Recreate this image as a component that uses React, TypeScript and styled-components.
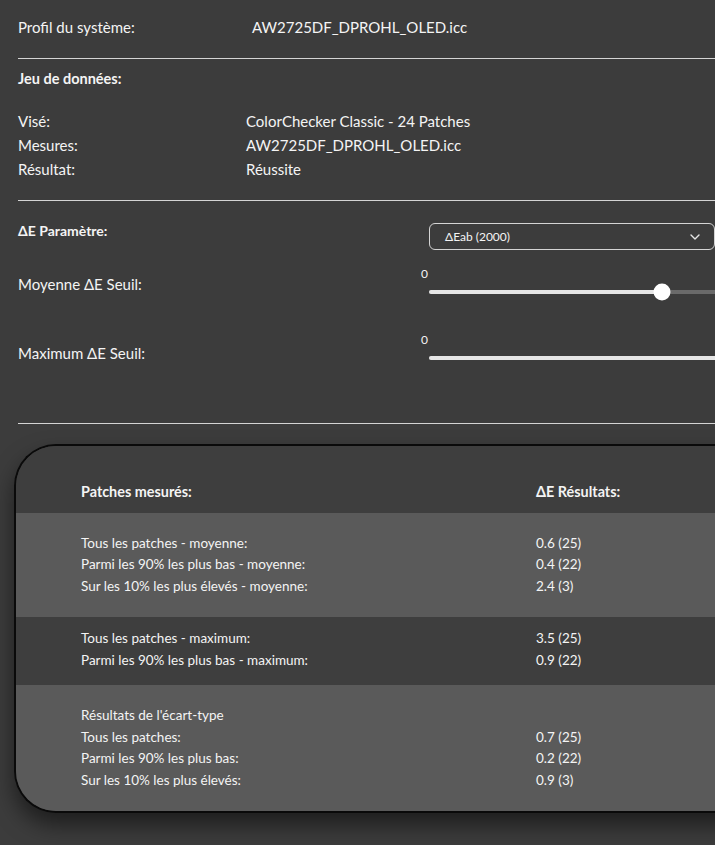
import { Fragment } from "react";
import styled, { createGlobalStyle } from "styled-components";

const GlobalStyle = createGlobalStyle`
  html, body {
    margin: 0;
    padding: 0;
    background: #3c3c3c;
    overflow: hidden;
  }
  body {
    font-family: Lato, "Liberation Sans", sans-serif;
    color: #f4f4f4;
  }
`;

const StyledPage = styled.div`
  width: 780px;
  padding: 15px 0 40px 18px;
  display: flex;
  flex-direction: column;
`;

const StyledInfoRow = styled.div<{ $col: number }>`
  display: grid;
  grid-template-columns: ${(p) => p.$col}px 1fr;
  font-size: 15px;
  line-height: 24px;
`;

const StyledDivider = styled.hr<{ $top: number; $bottom: number }>`
  border: none;
  border-top: 1px solid #d4d4d4;
  margin: ${(p) => p.$top}px 0 ${(p) => p.$bottom}px;
`;

const StyledHeading = styled.div`
  font-size: 14.5px;
  font-weight: 700;
  line-height: 24px;
`;

const StyledDataList = styled.div`
  margin-top: 18px;
  display: flex;
  flex-direction: column;
`;

const StyledParamRow = styled.div`
  display: grid;
  grid-template-columns: 411px 286px;
  align-items: start;
`;

const StyledParamLabel = styled.div`
  font-size: 14px;
  font-weight: 700;
  line-height: 16px;
`;

const StyledSelect = styled.div`
  height: 27px;
  box-sizing: border-box;
  border: 1px solid #d4d4d4;
  border-radius: 6px;
  padding: 0 14px 0 15px;
  display: flex;
  align-items: center;
  justify-content: space-between;
  font-size: 12px;
`;

const StyledSliderRow = styled.div<{ $top: number; $labelTop: number }>`
  display: grid;
  grid-template-columns: 403px 1fr;
  align-items: start;
  margin-top: ${(p) => p.$top}px;

  & > :first-child {
    margin-top: ${(p) => p.$labelTop}px;
  }
`;

const StyledSliderLabel = styled.div`
  font-size: 15px;
  line-height: 24px;
`;

const StyledSlider = styled.div<{ $gap: number }>`
  display: flex;
  flex-direction: column;
  gap: ${(p) => p.$gap}px;
`;

const StyledSliderValue = styled.div`
  font-size: 12px;
  line-height: 16px;
`;

const StyledTrack = styled.div`
  position: relative;
  margin-left: 8px;
  height: 4px;
  width: 320px;
  border-radius: 2px;
  background: #6a6a6a;
`;

const StyledFill = styled.div`
  height: 100%;
  border-radius: 2px;
  background: #e6e6e6;
`;

const StyledThumb = styled.div`
  position: absolute;
  top: 50%;
  width: 17px;
  height: 17px;
  border-radius: 50%;
  background: #fff;
  transform: translate(-50%, -50%);
`;

const StyledCard = styled.div`
  margin: 0 0 0 -4px;
  border: 2px solid #0a0a0a;
  border-right: none;
  border-radius: 42px 0 0 42px;
  overflow: hidden;
  background: #3e3e3e;
  box-shadow: 0 12px 22px rgba(0, 0, 0, 0.5);
`;

const StyledGroup = styled.div<{ $light?: boolean; $pt: number; $pb: number }>`
  background: ${(p) => (p.$light ? "#5a5a5a" : "#3e3e3e")};
  padding: ${(p) => p.$pt}px 0 ${(p) => p.$pb}px 65px;
  display: grid;
  grid-template-columns: 455px 1fr;
  font-size: 13.5px;
  line-height: 21.5px;
`;

const StyledCell = styled.div<{ $bold?: boolean }>`
  font-weight: ${(p) => (p.$bold ? 700 : 400)};
  font-size: ${(p) => (p.$bold ? "14.4px" : "inherit")};
`;

function Chevron() {
  return (
    <svg width="10" height="6" viewBox="0 0 10 6" fill="none">
      <path d="M1 1l4 4 4-4" stroke="#e6e6e6" strokeWidth="1.4" strokeLinecap="round" strokeLinejoin="round" />
    </svg>
  );
}

function Slider({ value, fill, gap }: { value: string; fill: number; gap: number }) {
  return (
    <StyledSlider $gap={gap}>
      <StyledSliderValue>{value}</StyledSliderValue>
      <StyledTrack>
        <StyledFill style={{ width: `${fill}px` }} />
        {fill < 320 && <StyledThumb style={{ left: `${fill}px` }} />}
      </StyledTrack>
    </StyledSlider>
  );
}

const groups: { light: boolean; pt: number; pb: number; rows: [string, string][] }[] = [
  {
    light: true,
    pt: 20,
    pb: 20,
    rows: [
      ["Tous les patches - moyenne:", "0.6 (25)"],
      ["Parmi les 90% les plus bas - moyenne:", "0.4 (22)"],
      ["Sur les 10% les plus élevés - moyenne:", "2.4 (3)"],
    ],
  },
  {
    light: false,
    pt: 11,
    pb: 14,
    rows: [
      ["Tous les patches - maximum:", "3.5 (25)"],
      ["Parmi les 90% les plus bas - maximum:", "0.9 (22)"],
    ],
  },
  {
    light: true,
    pt: 20,
    pb: 20,
    rows: [
      ["Résultats de l'écart-type", ""],
      ["Tous les patches:", "0.7 (25)"],
      ["Parmi les 90% les plus bas:", "0.2 (22)"],
      ["Sur les 10% les plus élevés:", "0.9 (3)"],
    ],
  },
];

export default function App() {
  return (
    <>
      <GlobalStyle />
      <StyledPage>
        <StyledInfoRow $col={234}>
          <div>Profil du système:</div>
          <div>AW2725DF_DPROHL_OLED.icc</div>
        </StyledInfoRow>
        <StyledDivider $top={19} $bottom={8} />
        <StyledHeading>Jeu de données:</StyledHeading>
        <StyledDataList>
          <StyledInfoRow $col={228}>
            <div>Visé:</div>
            <div>ColorChecker Classic - 24 Patches</div>
          </StyledInfoRow>
          <StyledInfoRow $col={228}>
            <div>Mesures:</div>
            <div>AW2725DF_DPROHL_OLED.icc</div>
          </StyledInfoRow>
          <StyledInfoRow $col={228}>
            <div>Résultat:</div>
            <div>Réussite</div>
          </StyledInfoRow>
        </StyledDataList>
        <StyledDivider $top={19} $bottom={22} />
        <StyledParamRow>
          <StyledParamLabel>ΔE Paramètre:</StyledParamLabel>
          <StyledSelect>
            <span>ΔEab (2000)</span>
            <Chevron />
          </StyledSelect>
        </StyledParamRow>
        <StyledSliderRow $top={16} $labelTop={6}>
          <StyledSliderLabel>Moyenne ΔE Seuil:</StyledSliderLabel>
          <Slider value="0" fill={233} gap={8} />
        </StyledSliderRow>
        <StyledSliderRow $top={36} $labelTop={9}>
          <StyledSliderLabel>Maximum ΔE Seuil:</StyledSliderLabel>
          <Slider value="0" fill={320} gap={8} />
        </StyledSliderRow>
        <StyledDivider $top={58} $bottom={20} />
        <StyledCard>
          <StyledGroup $pt={35} $pb={10}>
            <StyledCell $bold>Patches mesurés:</StyledCell>
            <StyledCell $bold>ΔE Résultats:</StyledCell>
          </StyledGroup>
          {groups.map((g, i) => (
            <StyledGroup key={i} $light={g.light} $pt={g.pt} $pb={g.pb}>
              {g.rows.map(([label, value]) => (
                <Fragment key={label}>
                  <StyledCell>{label}</StyledCell>
                  <StyledCell>{value}</StyledCell>
                </Fragment>
              ))}
            </StyledGroup>
          ))}
        </StyledCard>
      </StyledPage>
    </>
  );
}
